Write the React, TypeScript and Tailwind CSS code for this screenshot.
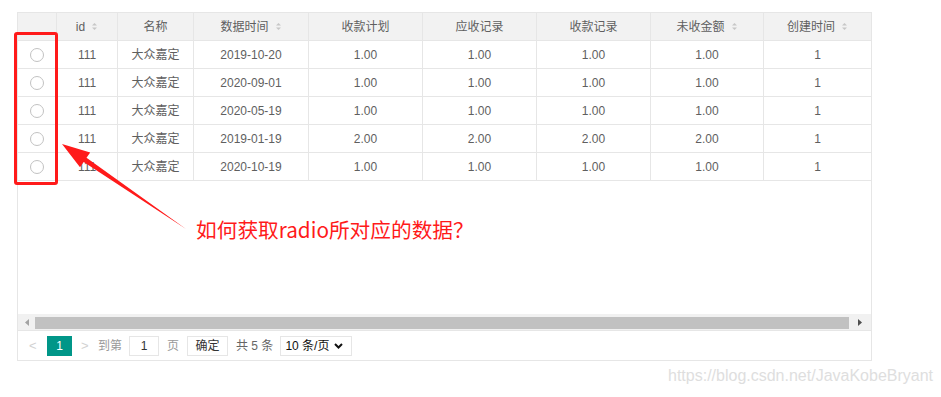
import React from 'react';

const font = "[font-family:'Liberation_Sans','Noto_Sans_CJK_SC',sans-serif]";

interface Row {
  id: string;
  name: string;
  date: string;
  plan: string;
  receivable: string;
  received: string;
  unpaid: string;
  created: string;
}

const rows: Row[] = [
  { id: '111', name: '大众嘉定', date: '2019-10-20', plan: '1.00', receivable: '1.00', received: '1.00', unpaid: '1.00', created: '1' },
  { id: '111', name: '大众嘉定', date: '2020-09-01', plan: '1.00', receivable: '1.00', received: '1.00', unpaid: '1.00', created: '1' },
  { id: '111', name: '大众嘉定', date: '2020-05-19', plan: '1.00', receivable: '1.00', received: '1.00', unpaid: '1.00', created: '1' },
  { id: '111', name: '大众嘉定', date: '2019-01-19', plan: '2.00', receivable: '2.00', received: '2.00', unpaid: '2.00', created: '1' },
  { id: '111', name: '大众嘉定', date: '2020-10-19', plan: '1.00', receivable: '1.00', received: '1.00', unpaid: '1.00', created: '1' },
];

const cols = 'grid grid-cols-[39px_61px_76px_115px_114px_114px_114px_113px_1fr]';
const cell = 'h-[28px] flex items-center justify-center border-b border-[#e6e6e6]';

const SortIcon: React.FC = () => (
  <svg width="7" height="9" viewBox="0 0 7 9" className="ml-[6px]">
    <path d="M3.5 1 L6 3.5 L1 3.5 Z" fill="#c6c6c6" />
    <path d="M3.5 8 L6 5.5 L1 5.5 Z" fill="#c6c6c6" />
  </svg>
);

const HeadCell: React.FC<{ label?: string; sort?: boolean; last?: boolean }> = ({ label, sort, last }) => (
  <div className={`${cell} ${last ? '' : 'border-r'} bg-[#f2f2f2]`}>
    {label && <span>{label}</span>}
    {sort && <SortIcon />}
  </div>
);

const BodyCell: React.FC<{ children?: React.ReactNode; last?: boolean }> = ({ children, last }) => (
  <div className={`${cell} ${last ? '' : 'border-r'}`}>{children}</div>
);

export default function App() {
  return (
    <div className={`relative w-[941px] h-[397px] bg-white overflow-hidden ${font}`}>
      <div className="ml-[17px] mt-[12px] w-[855px] border border-[#e6e6e6] text-[12px] text-[#5f5f5f]">
        {/* header */}
        <div className={cols}>
          <HeadCell />
          <HeadCell label="id" sort />
          <HeadCell label="名称" />
          <HeadCell label="数据时间" sort />
          <HeadCell label="收款计划" />
          <HeadCell label="应收记录" />
          <HeadCell label="收款记录" />
          <HeadCell label="未收金额" sort />
          <HeadCell label="创建时间" sort last />
        </div>
        {/* body */}
        {rows.map((r, i) => (
          <div key={i} className={cols}>
            <BodyCell>
              <span className="w-[14px] h-[14px] rounded-full border border-[#c2c2c2] bg-white" />
            </BodyCell>
            <BodyCell>{r.id}</BodyCell>
            <BodyCell>{r.name}</BodyCell>
            <BodyCell>{r.date}</BodyCell>
            <BodyCell>{r.plan}</BodyCell>
            <BodyCell>{r.receivable}</BodyCell>
            <BodyCell>{r.received}</BodyCell>
            <BodyCell>{r.unpaid}</BodyCell>
            <BodyCell last>{r.created}</BodyCell>
          </div>
        ))}
        <div className="h-[133px]" />
        {/* horizontal scrollbar */}
        <div className="h-[16px] bg-[#f1f1f1] flex items-center">
          <div className="w-[17px] flex justify-center">
            <svg width="4" height="7" viewBox="0 0 4 7">
              <path d="M4 0 L0 3.5 L4 7 Z" fill="#a3a3a3" />
            </svg>
          </div>
          <div className="w-[814px] h-[12px] bg-[#c1c1c1] mt-[1px]" />
          <div className="flex-1 flex justify-center">
            <svg width="4" height="7" viewBox="0 0 4 7">
              <path d="M0 0 L4 3.5 L0 7 Z" fill="#505050" />
            </svg>
          </div>
        </div>
        {/* pager */}
        <div className="h-[30px] border-t border-[#e6e6e6] flex items-center pl-[9px]">
          <span className="w-[20px] text-[#d2d2d2] text-[13px] pl-[2px]">&lt;</span>
          <span className="w-[25px] h-[20px] bg-[#009688] text-white flex items-center justify-center">1</span>
          <span className="ml-[9px] w-[14px] text-[#d2d2d2] text-[13px]">&gt;</span>
          <span className="ml-[3px] text-[#999]">到第</span>
          <span className="ml-[7px] w-[30px] h-[20px] border border-[#e6e6e6] text-[#333] flex items-center justify-center">1</span>
          <span className="ml-[8px] text-[#999]">页</span>
          <span className="ml-[8px] w-[41px] h-[20px] border border-[#e6e6e6] text-[#333] flex items-center justify-center">确定</span>
          <span className="ml-[8px] text-[#666]">共 5 条</span>
          <span className="ml-[7px] w-[72px] h-[20px] border border-[#e6e6e6] text-[#111] flex items-center pl-[4px] gap-[5px]">
            10 条/页
            <svg width="9" height="6" viewBox="0 0 9 6">
              <path d="M1 1 L4.5 4.5 L8 1" stroke="#111" strokeWidth="2" fill="none" />
            </svg>
          </span>
        </div>
      </div>

      {/* annotation overlay */}
      <div className="absolute left-[14px] top-[32px] w-[44px] h-[153px] border-[3px] border-[#ff1a1a] rounded-[3px]" />
      <svg className="absolute left-0 top-0" width="941" height="397" viewBox="0 0 941 397">
        <polygon
          points="186,229 86.5,157.7 90.2,152.4 62,144 80,167.2 83.7,161.9"
          fill="#ff1a1a"
        />
      </svg>
      <div className="absolute left-[196px] top-[215px] text-[20.7px] leading-[28px] text-[#ff1a1a] [font-family:'Noto_Sans_CJK_SC',sans-serif] whitespace-nowrap">
        如何获取radio所对应的数据？
      </div>
      <div className="absolute left-[668px] top-[366px] text-[16px] leading-[20px] text-[#dedede] whitespace-nowrap">
        https://blog.csdn.net/JavaKobeBryant
      </div>
    </div>
  );
}
